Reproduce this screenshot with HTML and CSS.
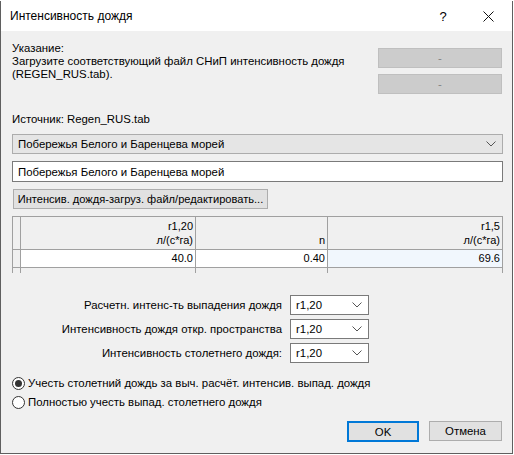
FILE: index.html
```html
<!DOCTYPE html>
<html lang="ru">
<head>
    <meta charset="UTF-8">
    <title>Интенсивность дождя</title>
    <link rel="stylesheet" href="styles.css">
</head>
<body>
    <div class="window">
        <div class="titlebar">
            <span class="title">Интенсивность дождя</span>
            <span class="help">?</span>
            <span class="close">
                <svg width="11" height="11" viewBox="0 0 11 11"><path d="M0.5 0.5 L10.5 10.5 M10.5 0.5 L0.5 10.5" stroke="#111" stroke-width="1" fill="none"/></svg>
            </span>
        </div>

        <div class="content">
            <div class="hint-row">
                <div class="hint">
                    Указание:<br>
                    Загрузите соответствующий файл СНиП интенсивность дождя<br>
                    (REGEN_RUS.tab).
                </div>
                <div class="side-buttons">
                    <div class="btn disabled">-</div>
                    <div class="btn disabled">-</div>
                </div>
            </div>

            <div class="source">Источник: Regen_RUS.tab</div>

            <div class="combo wide">
                <span>Побережья Белого и Баренцева морей</span>
                <svg class="chevron" width="10" height="6" viewBox="0 0 10 6"><path d="M0.5 0.5 L5 5 L9.5 0.5" stroke="#555" fill="none"/></svg>
            </div>

            <div class="textbox">Побережья Белого и Баренцева морей</div>

            <div class="btn load-btn"><span>Интенсив. дождя-загруз. файл/редактировать...</span></div>

            <div class="grid">
                <div class="cell corner"></div>
                <div class="cell head">r1,20<br>л/(с*га)</div>
                <div class="cell head">n</div>
                <div class="cell head">r1,5<br>л/(с*га)</div>
                <div class="cell corner"></div>
                <div class="cell value">40.0</div>
                <div class="cell value">0.40</div>
                <div class="cell value current">69.6</div>
                <div class="cell tail"></div>
                <div class="cell tail"></div>
                <div class="cell tail"></div>
                <div class="cell tail last"></div>
            </div>

            <div class="params">
                <label>Расчетн. интенс-ть выпадения дождя</label>
                <div class="combo small"><span>r1,20</span><svg class="chevron" width="10" height="6" viewBox="0 0 10 6"><path d="M0.5 0.5 L5 5 L9.5 0.5" stroke="#555" fill="none"/></svg></div>
                <label>Интенсивность дождя откр. пространства</label>
                <div class="combo small"><span>r1,20</span><svg class="chevron" width="10" height="6" viewBox="0 0 10 6"><path d="M0.5 0.5 L5 5 L9.5 0.5" stroke="#555" fill="none"/></svg></div>
                <label>Интенсивность столетнего дождя:</label>
                <div class="combo small"><span>r1,20</span><svg class="chevron" width="10" height="6" viewBox="0 0 10 6"><path d="M0.5 0.5 L5 5 L9.5 0.5" stroke="#555" fill="none"/></svg></div>
            </div>

            <div class="radios">
                <div class="radio checked"><span class="dot"></span>Учесть столетний дождь за выч. расчёт. интенсив. выпад. дождя</div>
                <div class="radio"><span class="dot"></span>Полностью учесть выпад. столетнего дождя</div>
            </div>

            <div class="actions">
                <div class="btn ok">OK</div>
                <div class="btn">Отмена</div>
            </div>
        </div>
    </div>
</body>
</html>
```

FILE: styles.css
```css
body {
    margin: 0;
    background-color: #ffffff;
    font-family: "Liberation Sans", Arial, sans-serif;
    font-size: 11.4px;
    color: #000;
}
.window {
    width: 511px;
    height: 452px;
    margin-top: 1px;
    border: 1px solid #5f5f5f;
    border-top: none;
    background-color: #f0f0f0;
}
.titlebar {
    height: 30px;
    background-color: #fff;
    display: flex;
    align-items: center;
}
.title {
    padding-left: 9px;
    flex: 1;
    font-size: 12px;
}
.help {
    width: 46px;
    text-align: center;
    font-size: 13px;
}
.close {
    width: 44px;
    display: flex;
    justify-content: center;
    padding-right: 2px;
}
.content {
    padding: 11px 9px 0 11px;
    display: flex;
    flex-direction: column;
}
.hint-row {
    display: flex;
    justify-content: space-between;
}
.hint {
    line-height: 13px;
}
.side-buttons {
    display: flex;
    flex-direction: column;
    gap: 6px;
    margin-top: 6px;
    margin-right: 1px;
}
.btn {
    height: 20px;
    box-sizing: border-box;
    border: 1px solid #adadad;
    background-color: #e1e1e1;
    display: flex;
    align-items: center;
    justify-content: center;
    white-space: nowrap;
    overflow: hidden;
}
.btn.disabled {
    width: 124px;
    background-color: #cccccc;
    border-color: #bfbfbf;
    color: #838383;
}
.source {
    margin-top: 18px;
    line-height: 14px;
}
.combo {
    height: 20px;
    box-sizing: border-box;
    display: flex;
    align-items: center;
    justify-content: space-between;
    padding: 0 6px 0 5px;
}
.combo.wide {
    margin-top: 8px;
    background-color: #e5e5e5;
    border: 1px solid #acacac;
}
.textbox {
    margin-top: 7px;
    height: 21px;
    box-sizing: border-box;
    border: 1px solid #7a7a7a;
    background-color: #fff;
    padding-left: 5px;
    display: flex;
    align-items: center;
}
.load-btn {
    margin-top: 7px;
    margin-left: 1px;
    width: 255px;
    font-size: 11.1px;
}
.grid {
    margin-top: 7px;
    width: 490px;
    display: grid;
    grid-template-columns: 8px 175px 132px 175px;
    grid-template-rows: 33px 18px 5px;
    border-top: 1px solid #a0a0a0;
    border-left: 1px solid #a0a0a0;
    font-size: 11px;
}
.cell {
    box-sizing: border-box;
    border-right: 1px solid #a0a0a0;
    border-bottom: 1px solid #a0a0a0;
    padding-right: 2px;
    text-align: right;
    line-height: 14px;
}
.corner {
    background-color: #f0f0f0;
}
.head {
    background-color: #f0f0f0;
    display: flex;
    align-items: flex-end;
    justify-content: flex-end;
    padding-bottom: 2px;
}
.value {
    background-color: #fff;
    line-height: 17px;
}
.value.current {
    background-color: #f1f7fd;
}
.tail {
    border-bottom: none;
}
.params {
    margin-top: 22px;
    display: grid;
    grid-template-columns: 270px 79px;
    column-gap: 8px;
    row-gap: 4px;
    align-items: center;
}
.params label {
    text-align: right;
}
.combo.small {
    background-color: #fff;
    border: 1px solid #7a7a7a;
}
.radios {
    margin-top: 13px;
    display: flex;
    flex-direction: column;
    gap: 5px;
}
.radio {
    display: flex;
    align-items: center;
    gap: 3px;
    line-height: 14px;
}
.dot {
    width: 13px;
    height: 13px;
    box-sizing: border-box;
    border: 1px solid #333;
    border-radius: 50%;
    display: flex;
    align-items: center;
    justify-content: center;
    background-color: #fff;
}
.radio.checked .dot::after {
    content: "";
    width: 7px;
    height: 7px;
    border-radius: 50%;
    background-color: #333;
}
.actions {
    margin-top: 12px;
    display: flex;
    justify-content: flex-end;
    gap: 10px;
    margin-right: 1px;
}
.actions .btn {
    width: 73px;
}
.actions .btn.ok {
    width: 72px;
    height: 21px;
    border: 2px solid #0078d7;
}
```
